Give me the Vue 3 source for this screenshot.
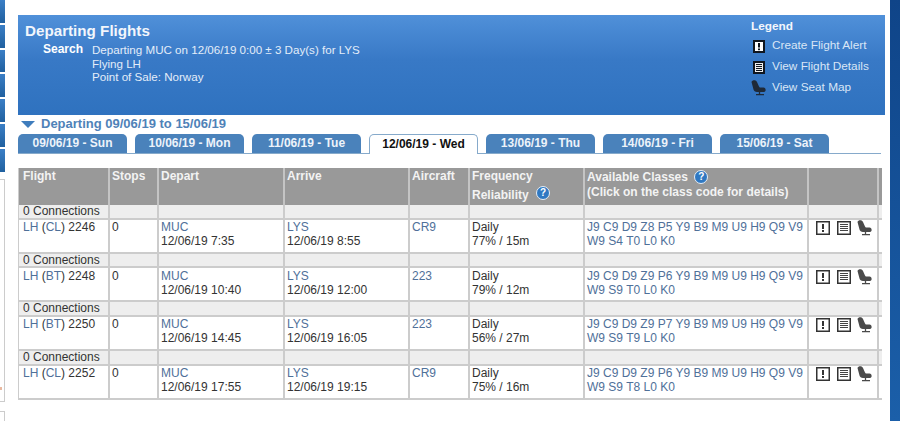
<template>
  <div class="page">
    <div class="sidebar">
      <div class="side-tabs">
        <div v-for="n in 7" :key="n" class="side-tab"></div>
      </div>
      <div class="side-box"><span class="speck"></span></div>
      <div class="side-box second"></div>
    </div>

    <div class="main">
      <div class="panel">
        <div class="summary">
          <h1>Departing Flights</h1>
          <div class="search">
            <span class="search-label">Search</span>
            <div>
              <div>Departing MUC on 12/06/19 0:00 ± 3 Day(s) for LYS</div>
              <div>Flying LH</div>
              <div>Point of Sale: Norway</div>
            </div>
          </div>
        </div>
        <div class="legend">
          <div class="legend-title">Legend</div>
          <div class="legend-row">
            <span class="legend-icon">
              <svg width="12" height="13" viewBox="0 0 12 13">
                <rect x="0" y="0" width="12" height="13" fill="#10161f" />
                <rect x="2" y="2" width="8" height="9" fill="#fff" />
                <rect x="5" y="3" width="2" height="4.5" fill="#10161f" />
                <rect x="5" y="8.5" width="2" height="1.7" fill="#10161f" />
              </svg>
            </span>
            <span>Create Flight Alert</span>
          </div>
          <div class="legend-row">
            <span class="legend-icon">
              <svg width="12" height="13" viewBox="0 0 12 13">
                <rect x="0" y="0" width="12" height="13" fill="#10161f" />
                <rect x="2" y="2" width="8" height="9" fill="#eee" />
                <path d="M3 3.5h6M3 5.5h6M3 7.5h6M3 9.5h6" stroke="#10161f" stroke-width="1" />
              </svg>
            </span>
            <span>View Flight Details</span>
          </div>
          <div class="legend-row">
            <span class="legend-icon seat-legend">
              <svg width="15" height="16" viewBox="0 0 15 16">
                <path d="M0.5 2 C1 0 5 -0.5 6 2 L8 6.5 C8.5 7.5 9 7.5 10 7.5 L12.5 7.5 C15 7.5 15.5 11.5 13 12 L6 12 C4 12 3 11 2.5 9.5 Z" fill="#1f2a38" />
                <path d="M8.5 12v2M5 14.7h8" stroke="#1f2a38" stroke-width="1.3" />
              </svg>
            </span>
            <span>View Seat Map</span>
          </div>
        </div>
      </div>

      <div class="range">
        <span class="range-arrow"></span>
        <span>Departing 09/06/19 to 15/06/19</span>
      </div>

      <div class="tabs">
        <div v-for="tab in tabs" :key="tab" class="tab" :class="{ active: tab === activeTab }">{{ tab }}</div>
      </div>

      <table class="flights">
        <colgroup>
          <col v-for="w in colWidths" :key="w.id" :style="{ width: w.px + 'px' }" />
        </colgroup>
        <thead>
          <tr>
            <th>Flight</th>
            <th>Stops</th>
            <th>Depart</th>
            <th>Arrive</th>
            <th>Aircraft</th>
            <th>
              Frequency
              <div class="reliability">Reliability <span class="help raised">?</span></div>
            </th>
            <th>
              Available Classes <span class="help">?</span>
              <div class="click-note">(Click on the class code for details)</div>
            </th>
            <th></th>
            <th></th>
          </tr>
        </thead>
        <tbody>
          <template v-for="f in flights" :key="f.number">
            <tr class="connections">
              <td>0 Connections</td>
              <td></td><td></td><td></td><td></td><td></td><td></td><td></td><td></td>
            </tr>
            <tr class="flight">
              <td><a>LH</a> (<a>{{ f.code }}</a>) {{ f.number }}</td>
              <td>0</td>
              <td><a>MUC</a><br />12/06/19 {{ f.depart }}</td>
              <td><a>LYS</a><br />12/06/19 {{ f.arrive }}</td>
              <td><a>{{ f.aircraft }}</a></td>
              <td>Daily<br />{{ f.reliability }}</td>
              <td><a>{{ f.classes[0] }}</a><br /><a>{{ f.classes[1] }}</a></td>
              <td>
                <div class="actions">
                  <svg width="14" height="14" viewBox="0 0 14 14">
                    <rect x="0.75" y="0.75" width="12.5" height="12.5" fill="#fff" stroke="#333" stroke-width="1.5" />
                    <rect x="6" y="3" width="2" height="5" fill="#333" />
                    <rect x="6" y="9" width="2" height="2" fill="#333" />
                  </svg>
                  <svg width="14" height="14" viewBox="0 0 14 14">
                    <rect x="0.75" y="0.75" width="12.5" height="12.5" fill="#fff" stroke="#333" stroke-width="1.5" />
                    <path d="M3 3.5h8M3 5.5h8M3 7.5h8M3 9.5h8" stroke="#444" stroke-width="1" />
                  </svg>
                  <svg class="seat" width="15" height="16" viewBox="0 0 15 16">
                    <path d="M0.5 2 C1 0 5 -0.5 6 2 L8 6.5 C8.5 7.5 9 7.5 10 7.5 L12.5 7.5 C15 7.5 15.5 11.5 13 12 L6 12 C4 12 3 11 2.5 9.5 Z" fill="#4a4a4a" />
                    <path d="M8.5 12v2M5 14.7h8" stroke="#4a4a4a" stroke-width="1.3" />
                  </svg>
                </div>
              </td>
              <td></td>
            </tr>
          </template>
        </tbody>
      </table>
    </div>

    <div class="strip"></div>
  </div>
</template>

<script setup>
const activeTab = '12/06/19 - Wed'

const tabs = [
  '09/06/19 - Sun',
  '10/06/19 - Mon',
  '11/06/19 - Tue',
  '12/06/19 - Wed',
  '13/06/19 - Thu',
  '14/06/19 - Fri',
  '15/06/19 - Sat'
]

const colWidths = [91, 49, 126, 125, 60, 115, 224, 70, 3].map((px, id) => ({ id, px }))

const flights = [
  {
    number: 2246, code: 'CL', depart: '7:35', arrive: '8:55', aircraft: 'CR9', reliability: '77% / 15m',
    classes: ['J9 C9 D9 Z8 P5 Y9 B9 M9 U9 H9 Q9 V9', 'W9 S4 T0 L0 K0']
  },
  {
    number: 2248, code: 'BT', depart: '10:40', arrive: '12:00', aircraft: '223', reliability: '79% / 12m',
    classes: ['J9 C9 D9 Z9 P6 Y9 B9 M9 U9 H9 Q9 V9', 'W9 S9 T0 L0 K0']
  },
  {
    number: 2250, code: 'BT', depart: '14:45', arrive: '16:05', aircraft: '223', reliability: '56% / 27m',
    classes: ['J9 C9 D9 Z9 P7 Y9 B9 M9 U9 H9 Q9 V9', 'W9 S9 T9 L0 K0']
  },
  {
    number: 2252, code: 'CL', depart: '17:55', arrive: '19:15', aircraft: 'CR9', reliability: '75% / 16m',
    classes: ['J9 C9 D9 Z9 P6 Y9 B9 M9 U9 H9 Q9 V9', 'W9 S9 T8 L0 K0']
  }
]
</script>

<style scoped>
.page {
  display: flex;
  width: 900px;
  height: 421px;
  overflow: hidden;
  background: #fff;
  font-family: "Liberation Sans", Arial, sans-serif;
  font-size: 12px;
  line-height: 13.6px;
  color: #333;
}

.sidebar {
  width: 5px;
  flex: none;
  display: flex;
  flex-direction: column;
}
.side-tabs {
  display: flex;
  flex-direction: column;
  gap: 2px;
  margin-bottom: 7px;
}
.side-tab {
  height: 22.8px;
  background: linear-gradient(#3b7fc6, #20609f);
}
.side-box {
  position: relative;
  flex: none;
  height: 221px;
  border: 1px solid #ccc;
  border-left: 0;
  background: #fff;
}
.side-box.second {
  height: 20px;
  margin-top: 9px;
}
.speck {
  position: absolute;
  left: 0;
  top: 207px;
  width: 2px;
  height: 3px;
  background: #e9b9a0;
}

.main {
  width: 867px;
  flex: none;
  margin-left: 13px;
  padding-top: 15px;
}

.panel {
  height: 100px;
  display: flex;
  justify-content: space-between;
  background: linear-gradient(#5090d9, #3879c6 45%, #2f72bf);
  color: #e3edf9;
  font-size: 11.6px;
}
.summary {
  padding: 8px 0 0 7px;
}
.summary h1 {
  margin: 0 0 5px;
  font-size: 15.2px;
  line-height: 15px;
  font-weight: bold;
  color: #f2f6fc;
}
.search {
  display: flex;
  padding-left: 18px;
}
.search-label {
  width: 49px;
  font-weight: bold;
  font-size: 12px;
  color: #fff;
}

.legend {
  width: 134px;
  padding-top: 5px;
  font-size: 11.8px;
}
.legend-title {
  font-weight: bold;
  color: #f4f7fc;
  margin-bottom: 2px;
}
.legend-row {
  height: 21px;
  display: flex;
  align-items: center;
  color: #d9e6f6;
}
.legend-icon {
  width: 19px;
  padding-left: 2px;
  display: flex;
  flex: none;
}
.seat-legend {
  padding-left: 0;
  width: 21px;
}

.range {
  display: flex;
  align-items: center;
  gap: 6px;
  height: 14px;
  margin-top: 2px;
  padding-left: 3px;
  font-size: 13px;
  font-weight: bold;
  color: #4f82b8;
}
.range-arrow {
  width: 0;
  height: 0;
  border-left: 7px solid transparent;
  border-right: 7px solid transparent;
  border-top: 7px solid #3f7dbd;
}

.tabs {
  display: flex;
  gap: 8px;
  width: 863px;
  height: 20px;
  margin-top: 3px;
  border-bottom: 1px solid #86aacb;
  box-sizing: border-box;
}
.tab {
  width: 109px;
  height: 19px;
  line-height: 19px;
  text-align: center;
  font-weight: bold;
  color: #edf3fa;
  background: #4a82bb;
  border-radius: 5px 5px 0 0;
}
.tab.active {
  height: 20px;
  box-sizing: border-box;
  line-height: 18px;
  color: #111;
  background: #fff;
  border: 1px solid #86aacb;
  border-bottom: 0;
}

.flights {
  width: 863px;
  margin-top: 14px;
  table-layout: fixed;
  border-collapse: separate;
  border-spacing: 0;
  border-left: 1px solid #ccc;
  border-bottom: 2px solid #ccc;
}
.flights th,
.flights td {
  padding: 0 0 0 2px;
  vertical-align: top;
  text-align: left;
  border-right: 2px solid #ccc;
  overflow: visible;
  white-space: nowrap;
}
.flights th:first-child,
.flights td:first-child {
  padding-left: 4px;
}
.flights th {
  height: 37px;
  box-sizing: border-box;
  padding-top: 2px;
  background: #999;
  color: #f3f3f3;
  font-weight: bold;
  border-right-color: #c4c4c4;
}
.flights th:last-child,
.flights td:last-child {
  padding: 0;
  border-right: 0;
}
.reliability {
  margin-top: 2px;
}
.click-note {
  margin-top: 1px;
}
.help {
  display: inline-block;
  width: 14px;
  height: 14px;
  margin-left: 3px;
  border-radius: 50%;
  background: #2f78c2;
  border: 1.5px solid #e6eef7;
  box-sizing: border-box;
  color: #fff;
  font-size: 10px;
  line-height: 11px;
  text-align: center;
  vertical-align: 1px;
}
.help.raised {
  margin-left: 4px;
  vertical-align: 3px;
}

.connections td {
  height: 14.67px;
  padding-top: 1px;
  line-height: 11.67px;
  box-sizing: border-box;
  background: #eee;
  border-bottom: 2px solid #ccc;
}
.flight td {
  height: 34px;
  box-sizing: border-box;
  padding-top: 0.4px;
  line-height: 14px;
  background: #fff;
  border-bottom: 2px solid #ccc;
}
.flights tbody tr:last-child td {
  height: 32px;
  border-bottom: 0;
}
.flights a {
  color: #4f7099;
}
.actions {
  display: flex;
  align-items: flex-start;
  gap: 7px;
  padding-left: 5px;
  margin-top: 1px;
}
.actions svg {
  flex: none;
}
.actions .seat {
  margin-left: -1px;
  margin-top: -1px;
}

.strip {
  width: 10px;
  flex: none;
  margin-left: 5px;
  background: linear-gradient(#0f4488, #1b5fa9);
}
</style>
